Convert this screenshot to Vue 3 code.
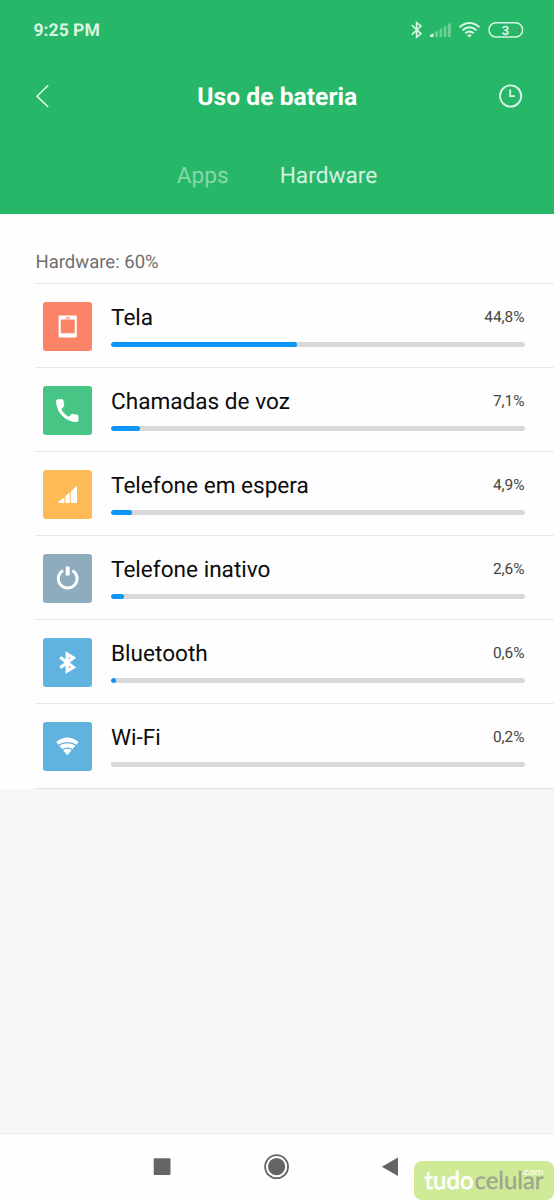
<script setup>
const rows = [
  { id: 'screen', name: 'Tela', value: '44,8%', fill: 45, color: '#fb8468' },
  { id: 'phone', name: 'Chamadas de voz', value: '7,1%', fill: 7.1, color: '#47c584' },
  { id: 'signal', name: 'Telefone em espera', value: '4,9%', fill: 5.1, color: '#fdba56' },
  { id: 'power', name: 'Telefone inativo', value: '2,6%', fill: 3.1, color: '#8facbf' },
  { id: 'bluetooth', name: 'Bluetooth', value: '0,6%', fill: 1.2, color: '#60b2df' },
  { id: 'wifi', name: 'Wi-Fi', value: '0,2%', fill: 0, color: '#60b2df' },
]
</script>

<template>
  <div class="screen">
    <header class="header">
      <div class="status">
        <span class="time">9:25 PM</span>
        <svg class="status-icons" width="116" height="24" viewBox="408 18 116 24" fill="none" stroke="#d9f5e4">
          <path d="M411.8 25.2L421 33.8L416.6 37.2V22.6L421 26L411.8 34.6" stroke-width="1.6" />
          <g stroke="none" fill="#d9f5e4">
            <path d="M430 37V35L433.6 33.2V37z" />
            <g opacity=".4">
              <path d="M435.3 37V31.8L437.9 30.3V37zM439.5 37V29.6L442.1 28.1V37zM443.7 37V27L446.3 25.4V37zM447.9 37V24.4L450.8 22.6V37z" />
            </g>
          </g>
          <g stroke-width="2">
            <path d="M459.5 27.2Q469.5 18.8 479.5 27.2" />
            <path d="M462.4 30.3Q469.5 24.2 476.6 30.3" />
            <path d="M465.3 33.3Q469.5 29.6 473.7 33.3" />
          </g>
          <path d="M467.2 35.2Q469.5 33.2 471.8 35.2L469.5 37.6z" fill="#d9f5e4" stroke="none" />
          <rect x="489" y="22.7" width="33.6" height="14.4" rx="7" stroke-width="1.5" />
          <path d="M519.2 28.2V31.8" stroke="#8b6b3b" stroke-width="1.2" />
          <text x="505.6" y="34.6" class="battery-level">3</text>
        </svg>
      </div>
      <div class="titlebar">
        <svg width="14" height="24" viewBox="0 0 14 24" fill="none" stroke="#e0f6e9" stroke-width="1.6">
          <path d="M13.2 1.2L2 12.2L13.2 23" />
        </svg>
        <h1>Uso de bateria</h1>
        <svg width="24" height="24" viewBox="0 0 24 24" fill="none" stroke="#e0f6e9" stroke-width="1.8">
          <circle cx="11.6" cy="12" r="10.6" />
          <path d="M11.2 5.4V12.2H16" />
        </svg>
      </div>
      <nav class="tabs">
        <span class="tab dim">Apps</span>
        <span class="tab">Hardware</span>
      </nav>
    </header>

    <main class="list">
      <h2>Hardware: 60%</h2>
      <div v-for="r in rows" :key="r.id" class="row">
        <svg class="tile" width="49" height="49" viewBox="0 0 49 49" :style="{ background: r.color }">
          <path v-if="r.id === 'screen'" fill="#fff" fill-rule="evenodd" d="M16.7 13.6H32.7Q33.8 13.6 33.8 14.6V34.6Q33.8 35.6 32.7 35.6H16.7Q15.6 35.6 15.6 34.6V14.6Q15.6 13.6 16.7 13.6zM17.8 17.6V31.2H31.8V17.6zM22.5 15.2V16.6H27V15.2z" />
          <path v-else-if="r.id === 'phone'" fill="#fff" stroke="#fff" stroke-width=".8" transform="translate(10 10) scale(1.19 1.22)" d="M6.62 10.79c1.44 2.83 3.76 5.14 6.59 6.59l2.2-2.2c.27-.27.67-.36 1.02-.24 1.12.37 2.33.57 3.57.57.55 0 1 .45 1 1V20c0 .55-.45 1-1 1-9.39 0-17-7.61-17-17 0-.55.45-1 1-1h3.5c.55 0 1 .45 1 1 0 1.25.2 2.45.57 3.57.11.35.03.74-.25 1.02l-2.2 2.2z" />
          <path v-else-if="r.id === 'signal'" fill="#fff" d="M15.5 33V31.5L21.3 27.5V33zM22.3 33V26.2L26.7 22.4V33zM27.8 33V21.2L29.2 20V33zM28.8 33V20.4L34 15.8V33z" />
          <g v-else-if="r.id === 'power'" fill="none" stroke="#fff">
            <path d="M20 16.5A9.4 9.4 0 1 0 29.4 16.5" stroke-width="2.9" />
            <path d="M24.7 12.6V21.6" stroke-width="3.9" />
          </g>
          <path v-else-if="r.id === 'bluetooth'" fill="none" stroke="#fff" stroke-width="3.2" d="M17.2 19.3L30.4 29.3L24.2 33V16L30.4 19.8L17.2 29.8" />
          <g v-else>
            <path fill="#fff" d="M24.4 33.3L13.2 20.1Q24.4 11 35.6 20.1z" />
            <g fill="none" :stroke="r.color" stroke-width="1.3">
              <path d="M14.8 23.9Q24.4 17.2 34 23.9" />
              <path d="M18.4 28.3Q24.4 23.8 30.4 28.3" />
            </g>
          </g>
        </svg>
        <div class="info">
          <div class="line">
            <span class="name">{{ r.name }}</span>
            <span class="value">{{ r.value }}</span>
          </div>
          <div class="track"><div class="fill" :style="{ width: r.fill + '%' }"></div></div>
        </div>
      </div>
    </main>

    <footer class="navbar">
      <svg width="554" height="66" viewBox="0 1134 554 66">
        <rect x="153.7" y="1158.2" width="16.8" height="16.8" rx="1" fill="#656565" />
        <circle cx="276.6" cy="1166.7" r="11.5" fill="none" stroke="#656565" stroke-width="1.8" />
        <circle cx="276.6" cy="1166.7" r="8.6" fill="#656565" />
        <path d="M381.8 1166.8L398 1157.6V1176z" fill="#656565" />
      </svg>
    </footer>
    <svg class="watermark" width="140" height="39" viewBox="414 1161 140 39">
      <rect x="414" y="1161" width="140" height="39" rx="8" fill="#cfea97" />
      <text x="424.5" y="1188.5" textLength="49" lengthAdjust="spacingAndGlyphs" class="brand bold" fill="#fff" stroke="#fff">tudo</text>
      <text x="474.5" y="1188.5" textLength="69" lengthAdjust="spacingAndGlyphs" class="brand" fill="#9da38f" stroke="#9da38f">celular</text>
      <text x="521.5" y="1174.6" textLength="22" lengthAdjust="spacingAndGlyphs" class="dotcom" fill="#fff">.com</text>
    </svg>
  </div>
</template>

<style>
body { background: #f6f6f6; }
</style>

<style scoped>
.screen {
  position: relative;
  display: flex;
  flex-direction: column;
  width: 554px;
  height: 1200px;
  background: #f6f6f6;
  font-family: Roboto, sans-serif;
  text-rendering: geometricPrecision;
  overflow: hidden;
}
.header { height: 214px; background: #27b768; color: #fff; }
.status {
  display: flex;
  align-items: center;
  justify-content: space-between;
  height: 60px;
  padding: 0 30px 0 33.5px;
}
.time { padding-top: 2px; font-size: 17.6px; font-weight: 700; color: #d9f5e4; }
.battery-level {
  fill: #d9f5e4;
  stroke: none;
  font-size: 13px;
  font-weight: 700;
  text-anchor: middle;
}
.titlebar {
  display: flex;
  align-items: center;
  justify-content: space-between;
  height: 72px;
  padding: 0 31.5px 0 35px;
}
h1 { margin: 3px 0 0 7px; font-size: 24.7px; line-height: 30px; font-weight: 700; }
.tabs {
  display: flex;
  justify-content: center;
  gap: 51px;
  height: 88px;
  line-height: 88px;
}
.tab { font-size: 22.7px; color: #d4f1e0; }
.dim { color: #87d7aa; }
.list { background: #fefefe; }
h2 {
  margin: 0;
  height: 69px;
  padding-left: 35.5px;
  box-sizing: border-box;
  padding-top: 34px;
  line-height: 28px;
  font-size: 18.5px;
  font-weight: 400;
  color: #6e6e6e;
}
.row {
  display: flex;
  box-sizing: border-box;
  height: 84.1px;
  margin-left: 35px;
  padding: 17.6px 29.5px 0 8px;
  border-top: 1px solid #e6e6e6;
}
.row:last-child { height: 85.5px; border-bottom: 1px solid #e3e3e3; }
.tile { flex: none; border-radius: 3px; }
.info { flex: 1; margin-left: 19px; }
.line { display: flex; justify-content: space-between; height: 40px; line-height: 32px; }
.name { font-size: 22.6px; color: #0c0c0c; }
.value { font-size: 15.4px; color: #444; line-height: 30px; }
.track { height: 5.2px; border-radius: 3px; background: #d8d8d8; overflow: hidden; }
.fill { height: 100%; border-radius: 3px; background: #0a95fb; }
.navbar {
  margin-top: auto;
  height: 66px;
  background: #fefefe;
  border-top: 1px solid #e9e9e9;
}
.navbar svg { display: block; }
.watermark { position: absolute; left: 414px; top: 1161px; }
.brand { font-family: Lato, sans-serif; font-size: 24.5px; stroke-width: .3px; }
.bold { stroke-width: .7px; }
.dotcom { font-family: Lato, sans-serif; font-size: 9.5px; }
</style>
